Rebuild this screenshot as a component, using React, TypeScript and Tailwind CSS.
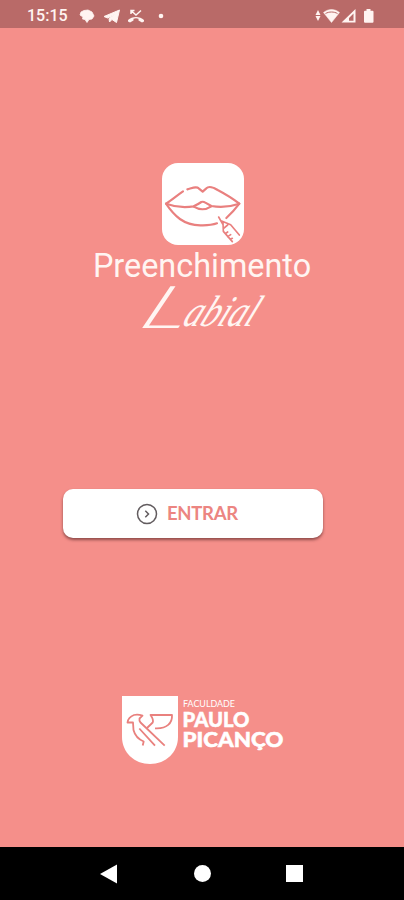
import * as React from 'react';

const StatusBar = () => (
  <header className="flex h-7 shrink-0 items-center bg-[#b96a68] pl-[27px] pr-[29px] pt-1 text-[#fff4f1]">
    <span className="w-[52px] font-['Roboto',sans-serif] text-base font-medium leading-none">15:15</span>
    {/* Notifications */}
    <svg className="h-[14px] w-[86px]" viewBox="0 0 86 14" fill="currentColor">
      <path d="M2 3 5 1.500 9 1l4 2 2 4-2 3-3 .5-2 3-2-3-2.500-.5L4 8 1 6Z" strokeLinejoin="round" stroke="currentColor" strokeWidth="0.8" />
      <path d="M25 7.500 40.500 1 37.500 13.500 33 10.500 30.500 13 30 9.500 35.500 5.500 28.500 9Z" stroke="currentColor" strokeWidth="1" />
      <path d="M49 11c4-4 12-4 16 0v1.500l-2 1-3.500-2V9.700c-2-.7-3-.7-5 0v1.800L51 13.500l-2-1Z" />
      <path d="M52 5V1.500h3.500M52 1.500l5 4.500 5-4.500" fill="none" stroke="currentColor" strokeWidth="1.5" />
      <circle cx="82" cy="7" r="2.3" />
    </svg>
    {/* Wi-Fi, signal, battery */}
    <svg className="ml-auto h-4 w-[60px]" viewBox="0 0 60 16" fill="currentColor">
      <path d="M0.500 7 3 2 5.500 7ZM0.500 8 3 13 5.500 8Z" />
      <path d="M8.500 4.500c5-4 11-4 16 0L16.500 14.500Z" stroke="currentColor" strokeWidth="0.5" />
      <path d="M10.500 5.500c3.500-2 8.500-2 12 0" fill="none" stroke="#b96a68" strokeWidth="1" />
      <path fillRule="evenodd" d="M26.500 14.500 40.500 1v13.500ZM34 12.800h4.500V5.500l-4.500 4.500Z" />
      <path d="M51.500 1h4v1.700h2q1 0 1 1v10q0 1-1 1h-7.500q-1 0-1-1v-10q0-1 1-1h1.500Z" />
    </svg>
  </header>
);

const LipsIcon = () => (
  <svg
    className="ml-px h-[82px] w-[82px] rounded-[16px] bg-white"
    viewBox="36 25 246 246"
    fill="none"
    stroke="#e9807f"
    strokeWidth="6.5"
    strokeLinecap="round"
    strokeLinejoin="round"
  >
    <path d="M99 110C80 123 66 136 48 147C73 184 100 211 151 212Q182 213 201 206" />
    <path d="M112 104C131 99 140 95 146 101L158 111L169 101C176 94 191 98 203 106Q241 126 268 147Q251 170 229 190" />
    <path d="M48 147C78 158 107 159 131 155Q144 149 154 142Q160 140 166 144L184 154C213 159 242 156 268 147" />
    <path d="M131 156Q158 172 184 155" />
    {/* Syringe */}
    <path d="M206 187 219 210M213 198 242 210 268 241M219 205 220 230 247 261M220 222l13-11M226 237l7-5M233 246l9-6M241 254l6-3" strokeWidth="5" />
  </svg>
);

const Brand = () => (
  <div className="flex flex-col items-center">
    <LipsIcon />
    <h1 className="mt-0.5 font-['Roboto',sans-serif] text-[32.4px] leading-[38px] text-[#fff5f2]">Preenchimento</h1>
    <svg
      className="h-[51px] w-[130px] overflow-visible"
      viewBox="0 0 130 51"
      fill="#fff5f2"
      fontFamily="'Liberation Serif', serif"
      fontStyle="italic"
    >
      <text transform="translate(-1 43) skewX(-25)">
        <tspan fontFamily="Lato, sans-serif" fontWeight="300" fontSize="59" textLength="47" lengthAdjust="spacingAndGlyphs">L</tspan>
        <tspan dx="-3" dy="-2" fontSize="44" textLength="71" lengthAdjust="spacingAndGlyphs">abial</tspan>
      </text>
    </svg>
  </div>
);

const EnterButton = () => (
  <button className="flex h-[49px] w-[260px] items-center rounded-[10px] bg-white pl-[73px] shadow-[0_2px_3px_rgba(90,40,40,0.65)]">
    <svg className="h-[22px] w-[22px]" viewBox="0 0 22 22" fill="none" stroke="#625c5f" strokeWidth="1.5">
      <circle cx="11" cy="11" r="9.5" />
      <path d="m9.300 7.800 3.200 3.200-3.200 3.200" strokeWidth="1.5" />
    </svg>
    <span className="ml-[9px] font-['Lato',sans-serif] text-[18.5px] font-bold leading-none tracking-[-0.3px] text-[#ec8581]">ENTRAR</span>
  </button>
);

const CollegeLogo = () => (
  <svg className="h-[70px] w-[164px] overflow-visible" viewBox="0 0 164 70" fill="white">
    <path d="M0 0h56v41c0 15-12 27-28 27S0 56 0 41Z" />
    <g fill="none" stroke="#e9817e" strokeWidth="1.8" strokeLinejoin="round">
      <path d="M20.700 49.500 21.700 45.500C17 43.500 13 40 11.500 34L11 26.500H5.500C6 22.500 8 20.500 12 19Q16 18 20.500 19.700L17.500 22.500Q17 25 18.500 26.500L42.700 49.700" />
      <path d="M17.300 32.500 33 49.700M25 32 30.700 26.500Q32 24 28.500 19H50C50.500 27 45 33 33 32.300" />
    </g>
    <g fontFamily="Lato, sans-serif">
      <text x="61" y="10.5" fontSize="8.5" textLength="52" lengthAdjust="spacingAndGlyphs">FACULDADE</text>
      <g fontSize="20" fontWeight="900" stroke="white" strokeWidth="0.5">
        <text x="60.5" y="31" textLength="67" lengthAdjust="spacingAndGlyphs">PAULO</text>
        <text x="60.5" y="51" textLength="101" lengthAdjust="spacingAndGlyphs">PICANÇO</text>
      </g>
    </g>
  </svg>
);

const NavigationBar = () => (
  <nav className="flex h-[53px] shrink-0 items-center justify-between bg-black pl-[100px] pr-[101px]">
    <svg className="h-5 w-[17px]" viewBox="0 0 17 20" fill="white">
      <path d="M0 10 17 0.5v19Z" />
    </svg>
    <span className="ml-px h-[17px] w-[17px] rounded-full bg-white" />
    <span className="h-[17px] w-[17px] bg-white" />
  </nav>
);

export default function App() {
  return (
    <div className="flex h-[900px] w-[404px] flex-col overflow-hidden bg-[#f58f8a]">
      <StatusBar />
      <main className="flex flex-1 flex-col items-center pt-[135px]">
        <Brand />
        <div className="mt-[153px] mr-[18px]">
          <EnterButton />
        </div>
        <div className="mt-[158px] ml-[3px]">
          <CollegeLogo />
        </div>
      </main>
      <NavigationBar />
    </div>
  );
}
